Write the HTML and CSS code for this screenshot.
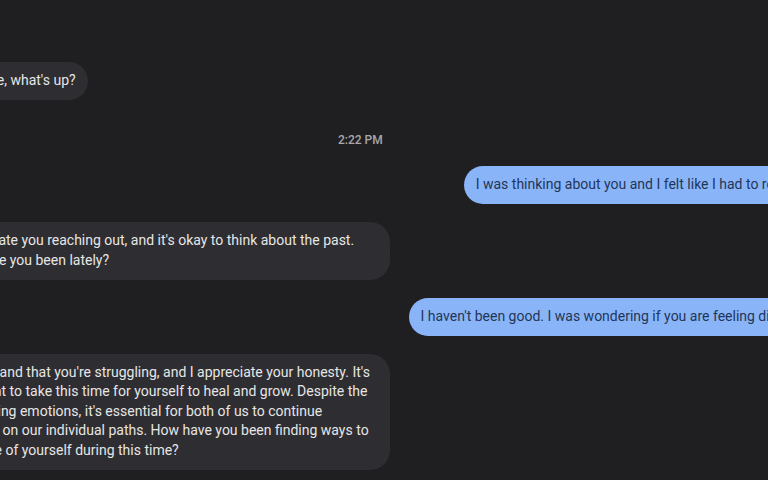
FILE: index.html
```html
<!DOCTYPE html>
<html lang="en">
<head>
    <meta charset="UTF-8">
    <meta name="viewport" content="width=device-width, initial-scale=1.0">
    <title>Chat</title>
    <link rel="stylesheet" href="styles.css">
</head>
<body>
    <div id="chat">
        <div class="msg received">Hey there, what's up?</div>

        <div class="time">2:22 PM</div>

        <div class="msg sent">I was thinking about you and I felt like I had to reach out.</div>

        <div class="msg received">I appreciate you reaching out, and it's okay to think about the past. How have you been lately?</div>

        <div class="msg sent">I haven't been good. I was wondering if you are feeling differently.</div>

        <div class="msg received">I understand that you're struggling, and I appreciate your honesty. It's important to take this time for yourself to heal and grow. Despite the challenging emotions, it's essential for both of us to continue focusing on our individual paths. How have you been finding ways to take care of yourself during this time?</div>
    </div>
</body>
</html>
```

FILE: styles.css
```css
html, body {
    margin: 0;
    padding: 0;
    height: 100%;
    overflow: hidden;
    background-color: #1f1f22;
}

body {
    font-family: Roboto, "Noto Sans", sans-serif;
    font-size: 14px;
    line-height: 19.5px;
    color: #e3e3e3;
}

#chat {
    width: 903px;
    margin-left: -67px;
    padding-top: 62px;
    display: flex;
    flex-direction: column;
    gap: 18px;
}

.msg {
    padding: 9.25px 12px;
    border-radius: 20px;
    max-width: 433px;
}

.received {
    align-self: flex-start;
    background-color: #2e2d31;
    color: #e6e6e6;
}

.sent {
    align-self: flex-end;
    background-color: #8ab4f8;
    color: #1f3659;
    white-space: nowrap;
    max-width: none;
}

.time {
    align-self: flex-start;
    margin-left: 405px;
    margin-top: 15px;
    margin-bottom: 1px;
    font-size: 12px;
    font-weight: 500;
    color: #a8a8ac;
    line-height: 14px;
}
```
